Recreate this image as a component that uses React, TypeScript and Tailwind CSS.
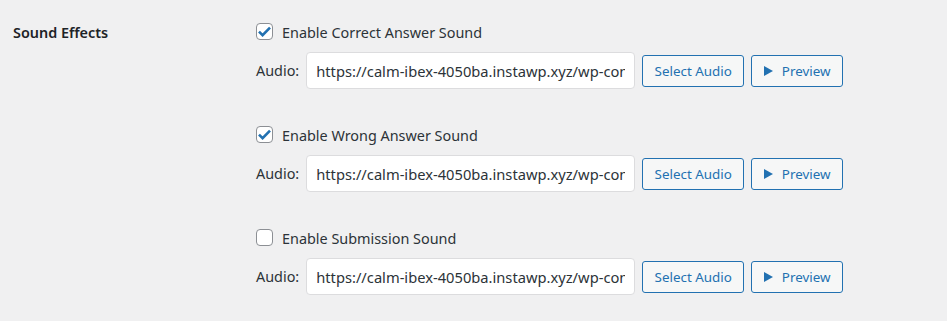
import React from "react";

const sounds = [
  { label: "Enable Correct Answer Sound", checked: true },
  { label: "Enable Wrong Answer Sound", checked: true },
  { label: "Enable Submission Sound", checked: false },
];

const url = "https://calm-ibex-4050ba.instawp.xyz/wp-content/uploads/sounds/correct.mp3";

function Checkbox({ checked }: { checked: boolean }) {
  return (
    <span className="w-[17px] h-[17px] shrink-0 rounded-[4px] border border-[#8c8f94] bg-white flex items-center justify-center">
      {checked && (
        <svg width="13" height="11" viewBox="0 0 13 11">
          <path d="M1 5.6 L4.6 9.2 L12 1.6" fill="none" stroke="#2271b1" strokeWidth="2.6" strokeLinejoin="miter" />
        </svg>
      )}
    </span>
  );
}

export default function App() {
  return (
    <div
      className="min-h-screen bg-[#f0f0f1] text-[#1d2327]"
      style={{ fontFamily: '"Noto Sans", "Open Sans", sans-serif' }}
    >
      <div className="flex pt-[22px] pl-[13px]">
        <div className="w-[243px] shrink-0 pt-[2px] text-[14.4px] font-semibold leading-[18px]">Sound Effects</div>

        <div className="flex flex-col gap-[36px]">
          {sounds.map((s) => (
            <div key={s.label} className="flex flex-col">
              <label className="flex items-center h-[18px] gap-[9px] text-[14.4px] text-[#2c3338]">
                <Checkbox checked={s.checked} />
                <span className="pt-[4px]">{s.label}</span>
              </label>

              <div className="flex items-center mt-[12px] text-[14.4px] text-[#2c3338]">
                <span className="mr-[7px]">Audio:</span>
                <input
                  readOnly
                  value={url}
                  className="w-[329px] h-[37px] rounded-[4px] border border-[#dcdcde] bg-white px-[9px] text-[14.7px] text-[#2c3338] outline-none"
                  style={{ fontFamily: '"Noto Sans", "Open Sans", sans-serif' }}
                />
                <button className="ml-[7px] h-[32px] w-[102px] rounded-[3px] border border-[#2271b1] bg-[#f6f7f7] text-[#2271b1] text-[13.4px] leading-[30px]">
                  Select Audio
                </button>
                <button className="ml-[7px] h-[32px] w-[92px] rounded-[3px] border border-[#2271b1] bg-[#f6f7f7] text-[#2271b1] text-[13.4px] leading-[30px] flex items-center justify-center gap-[9px]">
                  <svg width="9" height="10" viewBox="0 0 9 10">
                    <path d="M0 0 L9 5 L0 10 Z" fill="#2271b1" />
                  </svg>
                  <span>Preview</span>
                </button>
              </div>
            </div>
          ))}
        </div>
      </div>
    </div>
  );
}
